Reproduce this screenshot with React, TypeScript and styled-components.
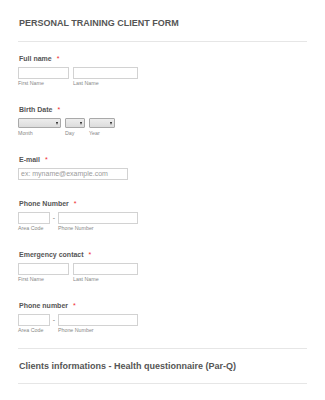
import React from "react";
import styled, { createGlobalStyle } from "styled-components";

const Global = createGlobalStyle`
  html, body { margin: 0; padding: 0; background: #fff; }
  body { font-family: "Liberation Sans", Arial, sans-serif; }
`;

const Page = styled.div`
  width: 325px;
  height: 400px;
  overflow: hidden;
  box-sizing: border-box;
  padding: 18px 18px 0 18px;
  display: flex;
  flex-direction: column;
`;

const Title = styled.h1`
  margin: 0 0 0 1px;
  font-size: 9px;
  line-height: 11px;
  font-weight: bold;
  color: #555;
`;

const Divider = styled.div<{ $top: number; $bottom: number }>`
  height: 1px;
  background: #e6e6e6;
  margin-top: ${(p) => p.$top}px;
  margin-bottom: ${(p) => p.$bottom}px;
`;

const Fields = styled.div`
  display: flex;
  flex-direction: column;
  gap: 20px;
`;

const Field = styled.div`
  display: flex;
  flex-direction: column;
`;

const Label = styled.div`
  margin-left: 1px;
  font-size: 7px;
  line-height: 8px;
  font-weight: bold;
  color: #555;
  margin-bottom: 4px;
`;

const Req = styled.span`
  color: #f0282d;
  margin-left: 5px;
  font-weight: normal;
`;

const Row = styled.div<{ $gap?: number }>`
  display: flex;
  align-items: flex-start;
  gap: ${(p) => p.$gap ?? 4}px;
`;

const Col = styled.div`
  display: flex;
  flex-direction: column;
`;

const Box = styled.div<{ $w: number; $h?: number }>`
  box-sizing: border-box;
  width: ${(p) => p.$w}px;
  height: ${(p) => p.$h ?? 12}px;
  border: 1px solid #d2d2d2;
  background: #fff;
  font-size: 7px;
  line-height: 10px;
  color: #9a9a9a;
  padding-left: 2px;
  white-space: nowrap;
  overflow: hidden;
`;

const Select = styled.div<{ $w: number }>`
  position: relative;
  box-sizing: border-box;
  width: ${(p) => p.$w}px;
  height: 10px;
  border: 1px solid #a9a9a9;
  border-radius: 1px;
  background: linear-gradient(#ededed, #dcdcdc);
  &::after {
    content: "";
    position: absolute;
    right: 2.5px;
    top: 3px;
    border-left: 1.5px solid transparent;
    border-right: 1.5px solid transparent;
    border-top: 3px solid #222;
  }
`;

const Sub = styled.div<{ $mt?: number }>`
  margin-top: ${(p) => p.$mt ?? 1}px;
  font-size: 5.3px;
  line-height: 6px;
  color: #888;
  white-space: nowrap;
`;

const Dash = styled.div`
  font-size: 7px;
  line-height: 12px;
  color: #777;
  width: 4px;
  text-align: center;
`;

const Heading = styled.h2`
  margin: 0 0 0 1px;
  font-size: 9px;
  line-height: 10px;
  font-weight: bold;
  color: #555;
`;

const NameRow = () => (
  <Row>
    <Col>
      <Box $w={51} />
      <Sub>First Name</Sub>
    </Col>
    <Col>
      <Box $w={65} />
      <Sub>Last Name</Sub>
    </Col>
  </Row>
);

const PhoneRow = () => (
  <Row $gap={2}>
    <Col>
      <Box $w={32} />
      <Sub>Area Code</Sub>
    </Col>
    <Dash>-</Dash>
    <Col>
      <Box $w={80} />
      <Sub>Phone Number</Sub>
    </Col>
  </Row>
);

export default function App() {
  return (
    <>
      <Global />
      <Page>
        <Title>PERSONAL TRAINING CLIENT FORM</Title>
        <Divider $top={12} $bottom={13} />
        <Fields>
          <Field>
            <Label>
              Full name<Req>*</Req>
            </Label>
            <NameRow />
          </Field>
          <Field>
            <Label>
              Birth Date<Req>*</Req>
            </Label>
            <Row>
              <Col>
                <Select $w={43} />
                <Sub $mt={2}>Month</Sub>
              </Col>
              <Col>
                <Select $w={20} />
                <Sub $mt={2}>Day</Sub>
              </Col>
              <Col>
                <Select $w={26} />
                <Sub $mt={2}>Year</Sub>
              </Col>
            </Row>
          </Field>
          <Field>
            <Label>
              E-mail<Req>*</Req>
            </Label>
            <Box $w={110}>ex: myname@example.com</Box>
          </Field>
          <Field>
            <Label>
              Phone Number<Req>*</Req>
            </Label>
            <PhoneRow />
          </Field>
          <Field>
            <Label>
              Emergency contact<Req>*</Req>
            </Label>
            <NameRow />
          </Field>
          <Field>
            <Label>
              Phone number<Req>*</Req>
            </Label>
            <PhoneRow />
          </Field>
        </Fields>
        <Divider $top={15} $bottom={12} />
        <Heading>Clients informations - Health questionnaire (Par-Q)</Heading>
        <Divider $top={12} $bottom={0} />
      </Page>
    </>
  );
}
